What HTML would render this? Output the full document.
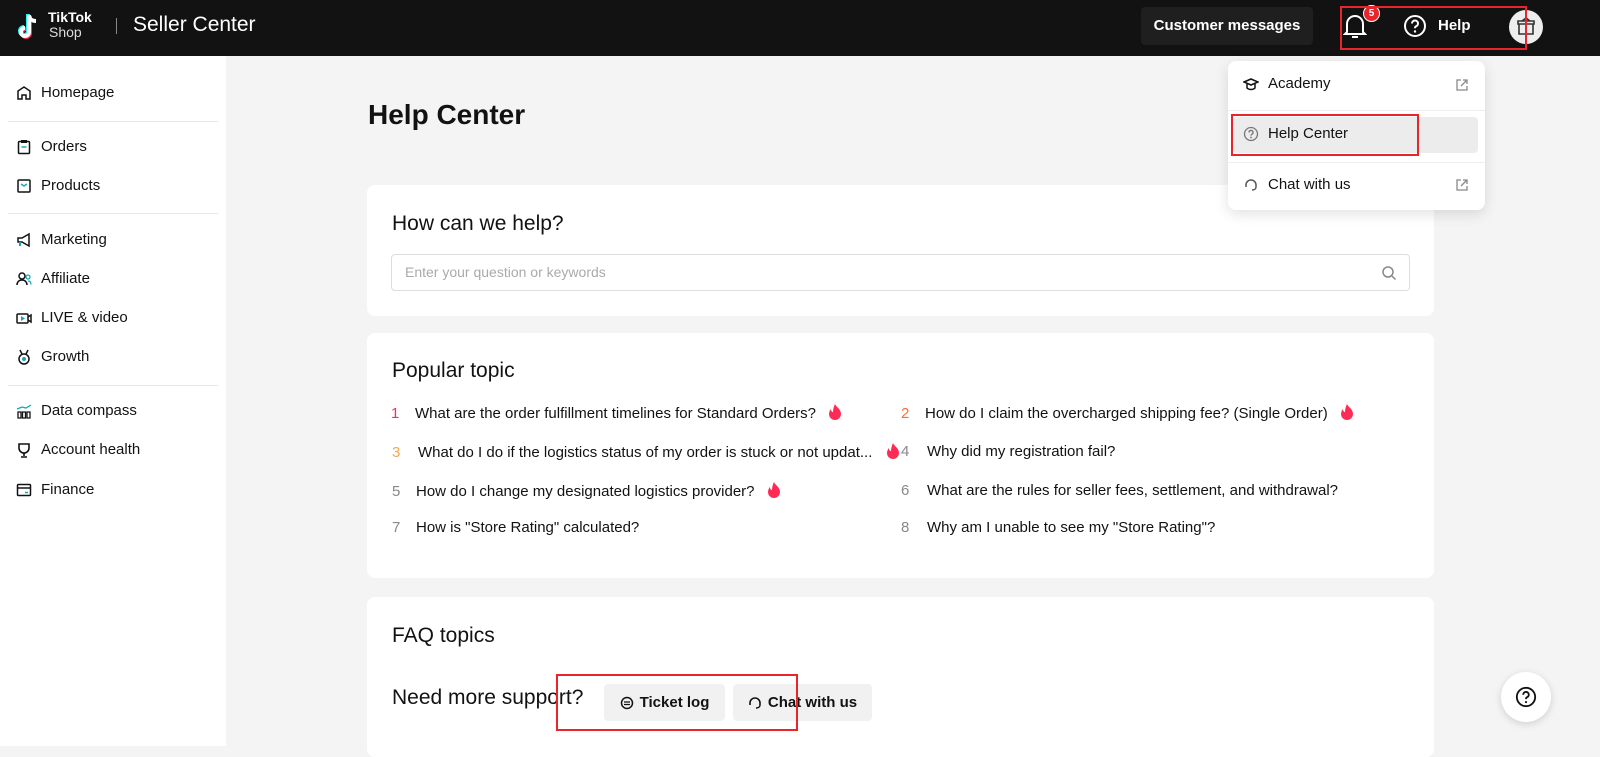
<!DOCTYPE html>
<html><head><meta charset="utf-8"><style>
*{box-sizing:border-box;margin:0;padding:0}
body{width:1600px;height:746px;overflow:hidden;background:#f4f4f4;font-family:"Liberation Sans",Arial,sans-serif;color:#121212;position:relative}
.hdr{position:absolute;left:0;top:0;width:1600px;height:56px;background:#121212;color:#fff}
.side{position:absolute;left:0;top:56px;width:226px;height:690px;background:#fff}
.nav{position:absolute;left:16px;font-size:15px;color:#121212;display:flex;align-items:center}
.nav svg{margin-right:9px}
.sep{position:absolute;left:8px;width:210px;height:1px;background:#e8e8e8}
.card{position:absolute;left:367px;width:1067px;background:#fff;border-radius:8px}
.q{position:absolute;font-size:15px;color:#121212;white-space:nowrap}
.q b{font-weight:normal;display:inline-block;width:24px}
.fire{display:inline-block;vertical-align:-2px;margin-left:12px}
.btn{position:absolute;top:684px;height:37px;background:#f1f1f1;border-radius:4px;font-size:15px;font-weight:bold;display:flex;align-items:center;justify-content:center}
.red{position:absolute;border:2px solid #e8252b}
.menu{position:absolute;left:1228px;top:61px;width:257px;height:149px;background:#fff;border-radius:8px;box-shadow:0 4px 14px rgba(0,0,0,.12)}
.mi{position:absolute;left:15px;font-size:15px;display:flex;align-items:center}
.mi svg{margin-right:9px}
</style></head><body>
<div class="hdr">
 <svg style="position:absolute;left:16px;top:12px" width="26" height="30" viewBox="0 0 26 30"><path d="M13 3v17a4 4 0 1 1-4-4" fill="none" stroke="#25f4ee" stroke-width="4" transform="translate(-1,-1)"/><path d="M13 3v17a4 4 0 1 1-4-4" fill="none" stroke="#fe2c55" stroke-width="4" transform="translate(1,1)"/><path d="M13 3v17a4 4 0 1 1-4-4M13 3c0 4 3 6 7 6" fill="none" stroke="#fff" stroke-width="4"/></svg>
 <div style="position:absolute;left:48px;top:10px;font-size:14px;font-weight:bold;line-height:14px">TikTok</div>
 <div style="position:absolute;left:49px;top:25px;font-size:14px;line-height:15px;color:#ddd">Shop</div>
 <div style="position:absolute;left:116px;top:18px;width:1px;height:16px;background:#888"></div>
 <div style="position:absolute;left:133px;top:13px;font-size:21px">Seller Center</div>
 <div style="position:absolute;left:1141px;top:7px;width:172px;height:38px;background:#1f1f1f;border-radius:4px;font-size:15px;font-weight:bold;text-align:center;line-height:38px">Customer messages</div>
 <svg style="position:absolute;left:1343px;top:13px" width="24" height="28" viewBox="0 0 24 28"><path d="M4 19V11a8 8 0 0 1 16 0v8l2 2H2z M9 24h6" fill="none" stroke="#fff" stroke-width="2"/></svg>
 <div style="position:absolute;left:1363px;top:5px;width:17px;height:17px;border-radius:50%;background:#e8252b;border:1px solid #fff;font-size:10px;font-weight:bold;text-align:center;line-height:15px">5</div>
 <svg style="position:absolute;left:1403px;top:14px" width="24" height="24" viewBox="0 0 24 24"><circle cx="12" cy="12" r="10" fill="none" stroke="#fff" stroke-width="2"/><path d="M9 9.5a3 3 0 1 1 4 2.8c-.8.4-1 1-1 2" fill="none" stroke="#fff" stroke-width="2"/><circle cx="12" cy="17.5" r="1.2" fill="#fff"/></svg>
 <div style="position:absolute;left:1438px;top:17px;font-size:15px;font-weight:bold">Help</div>
 <div style="position:absolute;left:1509px;top:10px;width:34px;height:34px;border-radius:50%;background:#eee"><svg width="34" height="34" viewBox="0 0 34 34"><path d="M10 14h14v10H10z M9 11h16v3H9z M17 11v13 M13 11l4-3 4 3" fill="none" stroke="#333" stroke-width="1.6"/></svg></div>
</div>
<div class="red" style="left:1340px;top:6px;width:187px;height:44px"></div>

<div class="side">
 <div class="nav" style="top:28px"><svg width="16" height="16" viewBox="0 0 16 16"><path d="M2 14V6l6-4 6 4v8h-4v-4H6v4z" fill="none" stroke="#121212" stroke-width="1.5"/></svg>Homepage</div>
 <div class="sep" style="top:65px"></div>
 <div class="nav" style="top:82px"><svg width="16" height="16" viewBox="0 0 16 16"><rect x="2.5" y="2.5" width="11" height="12" rx="1" fill="none" stroke="#121212" stroke-width="1.5"/><rect x="5" y="1" width="6" height="3" fill="#121212"/><path d="M5.5 8h5" stroke="#13a8b3" stroke-width="1.5"/></svg>Orders</div>
 <div class="nav" style="top:121px"><svg width="16" height="16" viewBox="0 0 16 16"><rect x="2" y="2" width="12" height="12" rx="1" fill="none" stroke="#121212" stroke-width="1.5"/><path d="M5 6l3 2 3-2" fill="none" stroke="#13a8b3" stroke-width="1.5"/></svg>Products</div>
 <div class="sep" style="top:157px"></div>
 <div class="nav" style="top:175px"><svg width="16" height="16" viewBox="0 0 16 16"><path d="M2 6h4l7-4v12l-7-4H2z" fill="none" stroke="#121212" stroke-width="1.5"/><path d="M4 10v4" stroke="#13a8b3" stroke-width="2"/></svg>Marketing</div>
 <div class="nav" style="top:214px"><svg width="16" height="16" viewBox="0 0 16 16"><circle cx="6" cy="5" r="3" fill="none" stroke="#121212" stroke-width="1.5"/><path d="M1 14c0-3 2-5 5-5s5 2 5 5" fill="none" stroke="#121212" stroke-width="1.5"/><circle cx="12" cy="6" r="2" fill="none" stroke="#13a8b3" stroke-width="1.3"/><path d="M12 10c2 0 3 1.5 3 3.5" fill="none" stroke="#13a8b3" stroke-width="1.3"/></svg>Affiliate</div>
 <div class="nav" style="top:253px"><svg width="16" height="16" viewBox="0 0 16 16"><rect x="1" y="4" width="11" height="9" rx="1" fill="none" stroke="#121212" stroke-width="1.5"/><path d="M12 7l3-2v7l-3-2" fill="none" stroke="#121212" stroke-width="1.5"/><path d="M5 6v5l4-2.5z" fill="#13a8b3"/></svg>LIVE &amp; video</div>
 <div class="nav" style="top:292px"><svg width="16" height="16" viewBox="0 0 16 16"><circle cx="8" cy="10" r="5" fill="none" stroke="#121212" stroke-width="1.5"/><path d="M4 1l2 4M12 1l-2 4" stroke="#121212" stroke-width="1.5"/><circle cx="8" cy="10" r="2" fill="#13a8b3"/></svg>Growth</div>
 <div class="sep" style="top:329px"></div>
 <div class="nav" style="top:346px"><svg width="16" height="16" viewBox="0 0 16 16"><path d="M2 9h3v6H2zM6.5 9h3v6h-3zM11 9h3v6h-3z" fill="none" stroke="#121212" stroke-width="1.3"/><path d="M1 6l5-2 4 1 5-3" fill="none" stroke="#13a8b3" stroke-width="1.3"/></svg>Data compass</div>
 <div class="nav" style="top:385px"><svg width="16" height="16" viewBox="0 0 16 16"><path d="M3 2h10v4a5 5 0 0 1-10 0z M8 11v3 M5 15h6" fill="none" stroke="#121212" stroke-width="1.6"/></svg>Account health</div>
 <div class="nav" style="top:425px"><svg width="16" height="16" viewBox="0 0 16 16"><rect x="1.5" y="2.5" width="13" height="11" rx="1" fill="none" stroke="#121212" stroke-width="1.5"/><path d="M1.5 6h13" stroke="#121212" stroke-width="1.5"/><path d="M9 10.5h3" stroke="#13a8b3" stroke-width="1.5"/></svg>Finance</div>
</div>

<div style="position:absolute;left:368px;top:99px;font-size:28px;font-weight:bold">Help Center</div>

<div class="card" style="top:185px;height:131px">
 <div style="position:absolute;left:25px;top:27px;font-size:21px">How can we help?</div>
 <div style="position:absolute;left:24px;top:69px;width:1019px;height:37px;border:1px solid #ddd;border-radius:4px;font-size:14px;color:#aaa;padding:9px 13px">Enter your question or keywords
  <svg style="position:absolute;right:12px;top:10px" width="16" height="16" viewBox="0 0 16 16"><circle cx="7" cy="7" r="5" fill="none" stroke="#888" stroke-width="1.5"/><path d="M11 11l3.5 3.5" stroke="#888" stroke-width="1.5"/></svg></div>
</div>

<div class="card" style="top:333px;height:245px">
 <div style="position:absolute;left:25px;top:26px;font-size:21px">Popular topic</div>
</div>
<div class="q" style="left:391px;top:404px"><b style="color:#fe2c55">1</b>What are the order fulfillment timelines for Standard Orders?<svg class="fire" width="14" height="16" viewBox="0 0 14 16"><path d="M7 0c1 3 6 5 6 10a6 6 0 0 1-12 0c0-2 1-4 2-5 0 2 1 3 2 3 0-3 1-6 2-8z" fill="#fe2c55"/></svg></div>
<div class="q" style="left:901px;top:404px"><b style="color:#ff6b3d">2</b>How do I claim the overcharged shipping fee? (Single Order)<svg class="fire" width="14" height="16" viewBox="0 0 14 16"><path d="M7 0c1 3 6 5 6 10a6 6 0 0 1-12 0c0-2 1-4 2-5 0 2 1 3 2 3 0-3 1-6 2-8z" fill="#fe2c55"/></svg></div>
<div class="q" style="left:392px;top:443px"><b style="color:#f0a857;width:26px">3</b>What do I do if the logistics status of my order is stuck or not updat...<svg style="vertical-align:-2px;margin-left:14px" width="14" height="16" viewBox="0 0 14 16"><path d="M7 0c1 3 6 5 6 10a6 6 0 0 1-12 0c0-2 1-4 2-5 0 2 1 3 2 3 0-3 1-6 2-8z" fill="#fe2c55"/></svg></div>
<div class="q" style="left:901px;top:443px"><b style="color:#888;width:26px">4</b>Why did my registration fail?</div>
<div class="q" style="left:392px;top:482px"><b style="color:#888">5</b>How do I change my designated logistics provider?<svg class="fire" width="14" height="16" viewBox="0 0 14 16"><path d="M7 0c1 3 6 5 6 10a6 6 0 0 1-12 0c0-2 1-4 2-5 0 2 1 3 2 3 0-3 1-6 2-8z" fill="#fe2c55"/></svg></div>
<div class="q" style="left:901px;top:482px"><b style="color:#888;width:26px">6</b>What are the rules for seller fees, settlement, and withdrawal?</div>
<div class="q" style="left:392px;top:519px"><b style="color:#888">7</b>How is "Store Rating" calculated?</div>
<div class="q" style="left:901px;top:519px"><b style="color:#888;width:26px">8</b>Why am I unable to see my "Store Rating"?</div>

<div class="card" style="top:597px;height:160px">
 <div style="position:absolute;left:25px;top:27px;font-size:21px">FAQ topics</div>
 <div style="position:absolute;left:25px;top:89px;font-size:21px">Need more support?</div>
</div>
<div class="btn" style="left:604px;width:121px"><svg width="14" height="14" viewBox="0 0 14 14" style="margin-right:6px"><circle cx="7" cy="7" r="5.5" fill="none" stroke="#121212" stroke-width="1.5"/><path d="M4 6h6M4 8.5h6" stroke="#121212" stroke-width="1.3"/></svg>Ticket log</div>
<div class="btn" style="left:733px;width:139px;font-weight:bold"><svg width="14" height="14" viewBox="0 0 14 14" style="margin-right:6px"><path d="M2 9V7a5 5 0 0 1 10 0v2" fill="none" stroke="#121212" stroke-width="1.6"/><path d="M12 9c0 2-2 3-4 3" fill="none" stroke="#121212" stroke-width="1.4"/></svg>Chat with us</div>
<div class="red" style="left:556px;top:674px;width:242px;height:57px"></div>

<div class="menu">
 <div class="mi" style="top:14px"><svg width="16" height="16" viewBox="0 0 16 16"><path d="M1 6l7-3 7 3-7 3z M4 8v4c2 2 6 2 8 0V8" fill="none" stroke="#121212" stroke-width="1.5"/></svg>Academy</div>
 <svg style="position:absolute;left:227px;top:17px" width="14" height="14" viewBox="0 0 14 14"><path d="M6 2H2v10h10V8 M8 2h4v4 M12 2L6 8" fill="none" stroke="#888" stroke-width="1.3"/></svg>
 <div style="position:absolute;left:0;top:49px;width:257px;height:1px;background:#eee"></div>
 <div style="position:absolute;left:5px;top:56px;width:245px;height:36px;background:#ececec;border-radius:4px"></div>
 <div class="mi" style="top:64px"><svg width="16" height="16" viewBox="0 0 16 16"><circle cx="8" cy="8" r="6.5" fill="none" stroke="#777" stroke-width="1.3"/><path d="M6 6.5a2 2 0 1 1 2.7 1.8c-.5.3-.7.6-.7 1.3" fill="none" stroke="#777" stroke-width="1.3"/><circle cx="8" cy="11.5" r=".9" fill="#777"/></svg>Help Center</div>
 <div style="position:absolute;left:0;top:101px;width:257px;height:1px;background:#eee"></div>
 <div class="mi" style="top:115px"><svg width="16" height="16" viewBox="0 0 16 16"><path d="M3 10V8a5 5 0 0 1 10 0v2" fill="none" stroke="#555" stroke-width="1.5"/><path d="M13 10c0 2-2 3-4 3" fill="none" stroke="#555" stroke-width="1.4"/></svg>Chat with us</div>
 <svg style="position:absolute;left:227px;top:117px" width="14" height="14" viewBox="0 0 14 14"><path d="M6 2H2v10h10V8 M8 2h4v4 M12 2L6 8" fill="none" stroke="#888" stroke-width="1.3"/></svg>
</div>
<div class="red" style="left:1231px;top:114px;width:188px;height:42px"></div>

<div style="position:absolute;left:1501px;top:672px;width:50px;height:50px;border-radius:50%;background:#fff;box-shadow:0 2px 8px rgba(0,0,0,.15)"><svg style="position:absolute;left:14px;top:14px" width="22" height="22" viewBox="0 0 24 24"><circle cx="12" cy="12" r="10" fill="none" stroke="#121212" stroke-width="2"/><path d="M9 9.5a3 3 0 1 1 4 2.8c-.8.4-1 1-1 2" fill="none" stroke="#121212" stroke-width="2"/><circle cx="12" cy="17.5" r="1.2" fill="#121212"/></svg></div>
</body></html>
